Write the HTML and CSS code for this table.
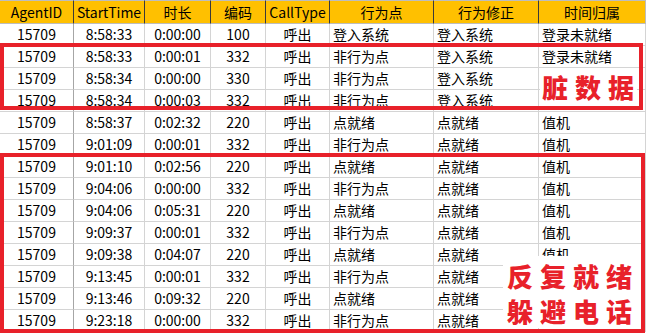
FILE: index.html
```html
<!DOCTYPE html>
<html lang="zh-CN">
<head>
    <meta charset="UTF-8">
    <meta name="viewport" content="width=device-width, initial-scale=1.0">
    <title>坐席行为记录</title>
    <link rel="stylesheet" href="styles.css">
</head>
<body>
    <div class="sheet">
        <table class="grid">
            <colgroup>
                <col class="c-id">
                <col class="c-start">
                <col class="c-dur">
                <col class="c-code">
                <col class="c-type">
                <col class="c-act">
                <col class="c-fix">
                <col class="c-own">
            </colgroup>
            <thead>
                <tr>
                    <th>AgentID</th>
                    <th>StartTime</th>
                    <th>时长</th>
                    <th>编码</th>
                    <th>CallType</th>
                    <th>行为点</th>
                    <th>行为修正</th>
                    <th>时间归属</th>
                </tr>
            </thead>
            <tbody id="rows"></tbody>
        </table>

        <!-- annotations drawn over the sheet -->
        <div class="mark mark-dirty"></div>
        <div class="mark mark-ready"></div>
        <div class="note note-dirty">脏数据</div>
        <div class="note note-ready">
            <span>反复就绪</span>
            <span>躲避电话</span>
        </div>
    </div>

    <script>
        // last column of the final rows sits under the note, so it is left blank
        const rows = [
            ['15709', '8:58:33', '0:00:00', '100', '呼出', '登入系统', '登入系统', '登录未就绪'],
            ['15709', '8:58:33', '0:00:01', '332', '呼出', '非行为点', '登入系统', '登录未就绪'],
            ['15709', '8:58:34', '0:00:00', '330', '呼出', '非行为点', '登入系统', ''],
            ['15709', '8:58:34', '0:00:03', '332', '呼出', '非行为点', '登入系统', ''],
            ['15709', '8:58:37', '0:02:32', '220', '呼出', '点就绪', '点就绪', '值机'],
            ['15709', '9:01:09', '0:00:01', '332', '呼出', '非行为点', '点就绪', '值机'],
            ['15709', '9:01:10', '0:02:56', '220', '呼出', '点就绪', '点就绪', '值机'],
            ['15709', '9:04:06', '0:00:00', '332', '呼出', '非行为点', '点就绪', '值机'],
            ['15709', '9:04:06', '0:05:31', '220', '呼出', '点就绪', '点就绪', '值机'],
            ['15709', '9:09:37', '0:00:01', '332', '呼出', '非行为点', '点就绪', '值机'],
            ['15709', '9:09:38', '0:04:07', '220', '呼出', '点就绪', '点就绪', '值机'],
            ['15709', '9:13:45', '0:00:01', '332', '呼出', '非行为点', '点就绪', ''],
            ['15709', '9:13:46', '0:09:32', '220', '呼出', '点就绪', '点就绪', ''],
            ['15709', '9:23:18', '0:00:00', '332', '呼出', '非行为点', '点就绪', '']
        ];

        const body = document.getElementById('rows');
        rows.forEach(row => {
            const tr = document.createElement('tr');
            row.forEach((value, i) => {
                const td = document.createElement('td');
                td.textContent = value;
                if (i >= 5) td.className = 'text';
                tr.appendChild(td);
            });
            body.appendChild(tr);
        });
    </script>
</body>
</html>
```

FILE: styles.css
```css
body {
    margin: 0;
    background: #fff;
    color: #000;
    font-family: "Noto Sans CJK SC", "Noto Sans", sans-serif;
}
.sheet {
    position: relative;
    width: 646px;
    height: 333px;
    overflow: hidden;
}
.grid {
    table-layout: fixed;
    width: 646px;
    border-collapse: separate;
    border-spacing: 0;
    font-size: 14px;
}
.c-id { width: 74px; }
.c-start { width: 71px; }
.c-dur { width: 66px; }
.c-code { width: 55px; }
.c-type { width: 64px; }
.c-act { width: 104px; }
.c-fix { width: 105px; }
.c-own { width: 107px; }

.grid th {
    background: #ffc000;
    font-weight: normal;
    height: 22px;
    line-height: 22px;
    padding: 0;
    border-top: 1px solid #bdbdbd;
    border-bottom: 1px solid #bdbdbd;
    border-right: 1px solid #3a3a3a;
    text-align: center;
    white-space: nowrap;
}
.grid th:last-child {
    border-right-color: #bdbdbd;
}
.grid td {
    height: 21px;
    line-height: 21px;
    padding: 0;
    border-bottom: 1px solid #d4d4d4;
    border-right: 1px solid #d4d4d4;
    text-align: center;
    white-space: nowrap;
    overflow: hidden;
}
.grid td:first-child {
    border-right-color: #a6a6a6;
}
.grid td.text {
    text-align: left;
    padding-left: 3px;
}

.mark {
    position: absolute;
    box-sizing: border-box;
    border: 4px solid #e8212a;
}
.mark-dirty {
    left: 0;
    top: 43px;
    width: 643px;
    height: 67px;
}
.mark-ready {
    left: 0;
    top: 153px;
    width: 645px;
    height: 180px;
}

.note {
    position: absolute;
    background: #fff;
    color: #e8212a;
    font-size: 26px;
    font-weight: 900;
    letter-spacing: 7px;
    white-space: nowrap;
    display: flex;
    flex-direction: column;
    justify-content: center;
    box-sizing: border-box;
}
.note-dirty {
    left: 540px;
    top: 68px;
    width: 97px;
    height: 37px;
    padding-left: 2px;
    line-height: 30px;
}
.note-ready {
    left: 503px;
    top: 256px;
    width: 138px;
    height: 72px;
    padding-left: 4px;
    padding-top: 2px;
    line-height: 35px;
}
```
